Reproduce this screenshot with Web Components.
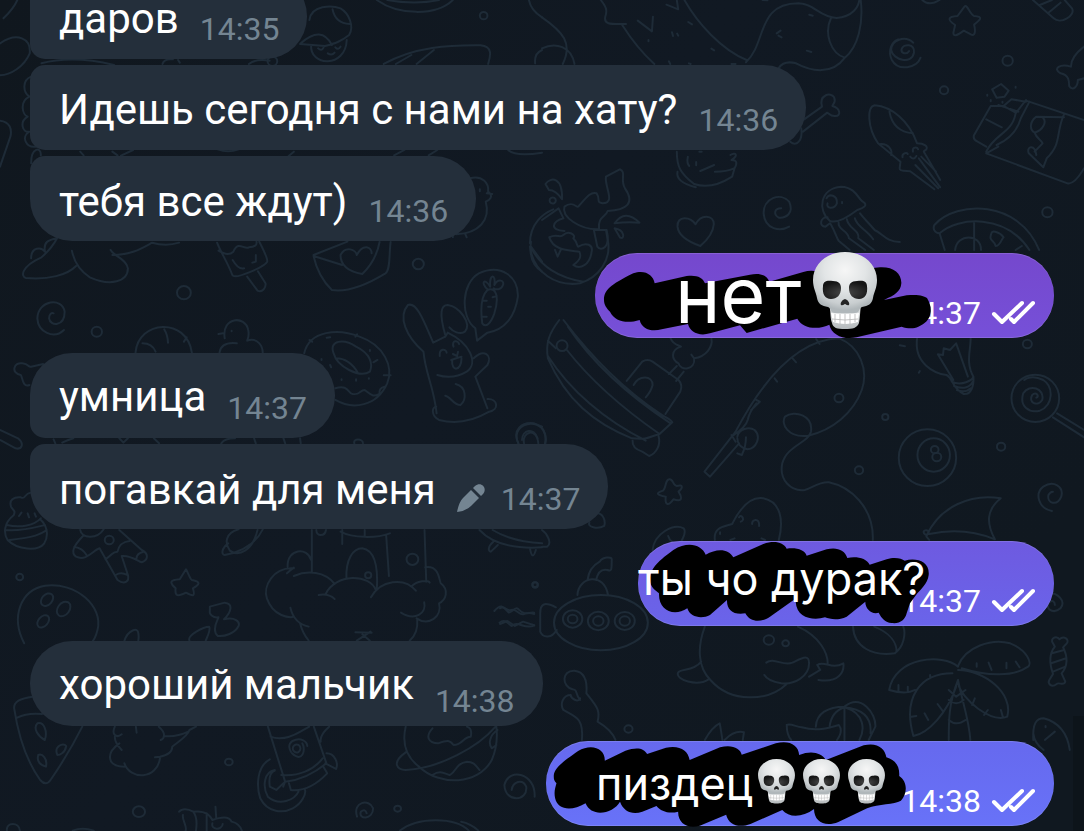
<!DOCTYPE html>
<html lang="ru">
<head>
<meta charset="utf-8">
<meta name="viewport" content="width=device-width, initial-scale=1">
<title>Чат</title>
<style>
  body { margin: 0; background: #111922; font-family: Roboto, "Noto Sans", sans-serif; }
</style>
</head>
<body>
<chat-thread>
  <message-group>
    <chat-message time="14:35" pos="mid">даров</chat-message>
    <chat-message time="14:36" pos="mid">Идешь сегодня с нами на хату?</chat-message>
    <chat-message time="14:36" pos="last">тебя все ждут)</chat-message>
  </message-group>
  <message-group out>
    <sent-message time="14:37" tone="violet"><big-caption>нет</big-caption><skull-emoji size="large"></skull-emoji></sent-message>
  </message-group>
  <message-group>
    <chat-message time="14:37" pos="first">умница</chat-message>
    <chat-message time="14:37" pos="last" edited>погавкай для меня</chat-message>
  </message-group>
  <message-group out>
    <sent-message time="14:37" tone="indigo">ты чо дурак?</sent-message>
  </message-group>
  <message-group>
    <chat-message time="14:38" pos="solo">хороший мальчик</chat-message>
  </message-group>
  <message-group>
    <sent-message time="14:38" tone="blue">пиздец<skull-emoji></skull-emoji><skull-emoji></skull-emoji><skull-emoji></skull-emoji></sent-message>
  </message-group>
</chat-thread>

<script>
const attach = (el, html) => {
  const t = document.createElement('template');
  t.innerHTML = html;
  el.attachShadow({ mode: 'open' }).append(t.content.cloneNode(true));
};

customElements.define('chat-wallpaper', class extends HTMLElement {
  constructor() {
    super();
    attach(this, `
<style>
  :host { display: block; position: absolute; inset: 0; overflow: hidden; }
  svg { width: 100%; height: 100%; display: block; }
  path, circle, ellipse { vector-effect: non-scaling-stroke; }
</style>
<svg viewBox="0 0 1084 831" preserveAspectRatio="xMidYMid slice" aria-hidden="true" fill="none" stroke="#1e2b37" stroke-width="2" stroke-linecap="round" stroke-linejoin="round">
 <defs><linearGradient id="g" x1="0" x2="1" y1="0" y2=".6"><stop offset="0" stop-color="#10171e"/><stop offset=".5" stop-color="#111923"/><stop offset="1" stop-color="#101820"/></linearGradient></defs>
 <path d="M0 0H1084V831H0Z" fill="url(#g)" stroke="none"/>
 <g transform="scale(.3457 .3333)">
  <path d="M10 55Q40 25 50 0M0 130C50 95 90 115 86 160C70 200 30 225 0 226M0 362C30 365 35 390 30 410L0 500M90 230C65 240 65 275 85 290C55 305 65 345 80 350C55 365 65 400 85 395C60 410 75 445 105 440M90 490C90 440 120 440 118 466M120 190Q210 165 330 195M470 192Q475 175 500 178M515 180L520 188M720 192Q740 175 780 182"/>
  <circle cx="788" cy="184" r="14"/><path d="M895 60C900 15 960 15 985 25C1010 40 1025 80 1010 105C985 125 970 130 940 138L868 132M962 28Q970 70 1012 72M870 130Q930 75 960 135M900 135C895 200 1000 205 1003 120M920 145Q930 155 936 143M970 142Q978 152 985 140M948 160Q960 168 968 158"/>
  <path d="M1090 0C1150 45 1260 50 1310 0M1120 0Q1200 15 1270 0"/><circle cx="1399" cy="47" r="11"/>
  <path d="M1110 192C1200 140 1300 135 1390 136C1425 140 1420 165 1412 192M1145 192L1190 165M1205 192L1255 150M1548 190Q1545 160 1568 150M1530 0Q1535 30 1568 52"/>
  <path d="M835 468L850 455M1140 466L1170 450M1240 466L1265 450M1470 450Q1490 470 1568 458M232 455L242 466M325 455L340 466M350 467L385 450M630 448Q660 460 690 448"/>
  <path d="M1360 535C1395 525 1415 550 1412 575C1430 590 1415 600 1405 605C1420 660 1385 700 1320 703M1388 568V574M1408 580L1424 582M1310 700V712M1345 700L1350 712"/>
 </g>
 <g transform="translate(542) scale(.3457 .3333)">
  <path d="M0 52C60 95 90 130 60 192M0 145C40 125 85 140 94 192M170 0C185 20 190 30 183 50C178 75 200 72 243 72M232 75Q275 145 325 192M360 14L394 28L390 0M277 62L318 94L321 50M412 0C450 70 520 150 592 180M423 66L434 73M376 97L379 108M391 101L394 107M308 120V124M490 146L498 151M367 184L371 192M425 190L430 192M548 192H560M590 187C650 130 620 10 742 10C790 12 800 50 852 54C900 50 915 20 918 0M836 54C815 100 835 160 876 173M922 0C930 70 915 140 876 173C840 225 780 215 735 190Q700 180 684 205M773 44L783 47M766 152L779 156M679 100L690 92M684 107L693 112M638 0L652 1"/>
  <path d="M1222 20C1230 10 1238 45 1250 48C1278 50 1268 60 1250 74C1256 100 1250 108 1242 104L1220 92C1200 108 1190 110 1190 98L1195 75C1170 58 1175 50 1202 48Z"/>
  <path d="M1062 153C1055 165 1038 160 1040 148C1045 130 1080 130 1076 158C1070 195 1015 180 1010 150C1010 120 1050 105 1074 128M1095 173C1085 205 1030 215 1012 180C1000 155 1010 125 1030 118"/>
  <circle cx="1347" cy="182" r="15"/><circle cx="1163" cy="271" r="12"/><circle cx="1462" cy="637" r="15"/>
  <path d="M1100 0Q1120 20 1150 0M1420 0L1480 55C1500 75 1545 45 1533 25L1512 0M1440 15L1475 0M1465 38L1500 8"/>
  <path d="M1568 140Q1530 170 1530 200C1500 190 1475 205 1500 220C1525 225 1525 245 1525 258C1535 275 1550 260 1550 240L1568 235"/>
  <path d="M745 368L810 320C800 285 835 275 845 292C852 308 840 312 840 318C865 325 865 350 848 348C835 350 830 340 825 338L755 395M750 385C755 425 735 440 718 425"/>
  <path d="M390 455C390 500 400 520 440 552Q490 570 550 530L557 505C565 490 565 480 548 480C570 465 560 455 545 465M392 515Q385 545 445 562M422 470Q418 490 426 498M446 486V496M458 513L498 495M500 515Q535 515 555 505M455 455H462"/>
  <path d="M963 316C940 320 940 380 972 430L1037 485C1035 505 1030 512 1045 512L1065 514L1135 568M963 316C1010 320 1060 360 1085 430C1105 430 1120 440 1110 450C1100 455 1105 455 1110 465L1152 540M1005 335Q1015 395 1073 400M980 432C1000 430 1015 450 1010 465M1080 495L1146 565M1090 475L1152 562M1097 470L1140 515M1043 472C1040 460 1055 455 1058 462M1073 455C1070 440 1085 440 1088 448M1065 470Q1075 482 1083 468"/>
  <path d="M1302 268L1328 252L1350 272L1338 290L1315 293ZM1358 298L1335 318H1298L1250 405Q1245 418 1260 425L1285 440M1335 318L1370 338M1285 358L1330 382M1320 315L1378 335M1285 455C1310 400 1360 400 1370 340L1400 300M1315 435Q1370 410 1385 355L1410 305M1285 460L1320 440M1358 298L1400 305M1400 302L1568 360M1285 460L1520 550Q1540 555 1568 505M1510 343C1485 400 1505 430 1460 475L1450 502L1408 460C1400 440 1425 430 1430 465M1510 352L1430 350C1410 365 1410 390 1425 398C1450 390 1460 365 1450 355M1425 398C1430 415 1445 420 1448 430L1425 455M1288 284V287M1298 300V304M1370 260V263M1332 305V308"/>
  <path d="M715 680C690 695 645 690 641 640C640 595 690 575 715 605C730 640 705 655 685 653C670 645 670 625 692 625"/>
  <path d="M458 738Q395 715 392 680C390 645 430 650 444 673C460 640 497 645 497 672Q495 705 458 738Z"/>
  <path d="M833 663C795 630 805 565 865 560C910 562 915 600 928 605C945 615 930 625 912 630C880 655 850 670 833 663M826 652C805 650 800 680 820 680L833 670M823 595C830 580 855 585 853 610C845 630 820 625 826 610M868 606V610M835 672C850 700 850 710 858 722L890 750M858 668C855 690 885 690 888 715L935 750M882 658C885 685 920 690 915 715L960 750M905 655C910 680 940 690 958 718M920 640C935 660 955 680 962 690C985 700 995 725 1035 726"/>
  <path d="M1150 700C1135 700 1130 685 1135 675C1200 600 1380 600 1438 750M1150 700C1205 650 1340 640 1410 750M1150 700L1165 750M1250 665V750M1195 750C1200 700 1270 700 1270 750M1300 700C1290 725 1310 720 1312 738C1325 740 1330 715 1335 712C1325 695 1300 690 1300 700M1370 750L1388 738"/>
  <path d="M0 660L48 625L62 655C30 665 20 690 65 693M22 602A9 9 0 1 0 22 601M10 552C25 530 60 530 58 598Q40 570 20 570ZM65 620C90 600 100 625 105 620C130 590 140 575 158 580C170 600 155 605 175 610C215 610 180 560 185 530L225 508C245 515 225 540 240 565C270 610 245 630 190 633C185 650 160 650 165 688C110 690 55 650 65 620M210 670Q240 625 282 668Q245 665 210 670M210 685C240 690 240 720 226 713ZM150 690H187C200 745 170 755 160 740Z"/>
 </g>
 <g transform="translate(0 230) scale(.3457 .3333)">
  <path d="M90 85C90 50 120 50 130 65C125 35 140 30 165 25Q150 55 120 82C60 110 60 140 75 144C140 150 195 135 220 108M208 62C215 100 235 125 260 142C320 170 370 155 370 115C365 85 330 80 320 60M325 75C380 75 410 55 440 38Q480 50 518 38M628 38C635 60 660 100 672 135C680 150 765 110 773 95Q775 85 750 35M632 62Q660 80 675 65C690 30 705 60 720 52Q745 50 742 35M673 90Q690 120 706 115M740 75V95L730 98M715 140L745 182C760 190 770 170 768 160L746 124"/>
  <path d="M907 78Q920 140 960 180Q1020 190 1115 130C1130 120 1125 70 1130 36M907 78L990 105M907 75L1005 35M1098 36C1090 80 1070 110 1048 132C1010 125 985 110 985 75C1000 45 1030 60 1032 75C1050 40 1075 50 1075 70"/>
  <circle cx="1210" cy="102" r="16"/><circle cx="532" cy="188" r="20"/><circle cx="280" cy="305" r="15"/>
  <path d="M185 300C155 330 110 305 108 265C110 210 180 200 187 245C187 290 145 290 142 265C142 250 150 248 155 250"/>
  <path d="M392 368C400 270 540 260 555 368M475 298Q485 315 486 338M532 335L540 322M412 340Q440 340 450 365M635 368Q640 335 685 340M650 325C640 260 710 255 718 300C722 320 715 330 715 332C745 320 760 350 760 368M632 312L645 310M670 302V304"/>
  <path d="M85 465C65 475 65 440 60 435C30 430 40 395 65 400C85 402 80 412 90 410L125 402M0 600L52 625C70 640 65 660 45 655L0 630"/>
  <path d="M880 370C895 300 980 295 1040 320C1110 345 1140 410 1120 460C1090 530 1020 540 970 510M965 370C950 330 995 325 1030 350C1070 370 1080 400 1070 425C1040 445 975 410 965 370M972 385Q1010 385 1035 428M970 475C1000 465 1005 480 1015 490C1040 500 1040 480 1055 480C1080 500 1080 500 1098 492Q1095 475 1112 470M895 330L903 335M945 323L955 322M1028 320L1033 313M1070 360V363M1080 397L1092 390M1110 436H1130M955 405L958 412M930 387V390M988 448V450M1030 448V452M1067 445V446"/>
  <path d="M1253 338C1225 270 1205 215 1180 225C1150 260 1175 320 1225 365C1230 430 1255 470 1263 550M1253 338L1288 320M1288 315C1270 250 1275 225 1295 225C1330 230 1365 280 1345 305C1330 315 1310 305 1300 292M1288 320L1295 308C1360 340 1385 400 1350 425Q1310 450 1265 435M1370 385C1400 355 1425 375 1410 405L1375 440L1410 535M1410 507C1440 505 1445 540 1415 545Q1340 590 1270 570C1245 555 1250 530 1262 530M1272 378C1270 355 1290 355 1292 368M1312 350C1305 330 1325 330 1328 342M1310 372L1322 378L1325 365M1305 390L1320 385L1335 380M1308 392C1305 425 1335 425 1335 385M1288 497C1305 500 1310 525 1332 525C1350 510 1350 470 1318 462"/>
  <path d="M1375 295C1330 260 1335 160 1385 130C1450 100 1500 140 1498 200C1490 260 1460 300 1410 308L1380 332ZM1410 180C1435 170 1445 200 1430 250C1420 280 1405 295 1395 280C1390 240 1390 200 1410 180M1410 178C1390 160 1400 140 1418 170C1415 130 1435 130 1430 165C1440 145 1460 150 1455 165C1450 180 1435 180 1428 175M1397 212H1408M1412 230H1420M1397 260H1408M1437 198L1425 202"/>
  <path d="M1536 35C1530 80 1545 110 1568 125M1536 50L1568 95M155 628L160 640M180 638Q195 630 212 625M345 625L357 638L370 625M445 625L460 640M640 640Q650 625 680 625M735 625L740 640M820 625L825 640M868 625L870 640"/>
  <path d="M1500 642C1480 600 1510 575 1545 580L1568 590M1510 630C1510 600 1545 590 1555 625"/>
 </g>
 <g transform="translate(542 320) scale(.3457 .3333)">
  <path d="M50 0C20 40 10 70 17 115C70 240 150 310 260 355C310 360 310 350 340 342L377 307C370 295 350 290 340 280C240 210 150 120 62 0M17 62L40 85M72 90C140 180 240 270 340 342M17 108C80 210 180 300 300 362M75 20C140 120 240 220 372 310M262 362Q260 385 290 395L310 408C330 400 345 375 337 348M245 183L290 125Q305 115 320 125L395 180Q408 195 400 215L357 282M265 195C280 165 320 165 320 195Q315 215 300 232M367 162L390 138M388 183L410 155M372 55C380 75 395 75 402 80C370 90 375 120 395 130C400 155 445 150 440 115L432 104M440 115C475 110 495 80 490 55"/>
  <circle cx="58" cy="77" r="16"/>
  <path d="M860 55C920 80 945 150 925 210C900 280 840 330 770 347C710 355 690 310 703 290C730 270 785 285 778 335C770 370 710 375 695 430C685 480 720 515 760 510C780 505 800 485 830 487C890 500 960 560 957 660M860 55Q700 60 560 335L470 455L486 470L570 370M793 57L803 72M725 115L735 127M673 175L680 185M620 240L630 245L605 270M620 250Q600 275 595 300Q590 320 555 345M548 345L560 365M565 350C570 325 600 320 615 330C635 350 620 385 595 388C575 385 565 370 565 355M590 352Q590 380 578 405L565 400"/>
  <circle cx="859" cy="234" r="13"/><circle cx="993" cy="291" r="9"/><circle cx="1328" cy="380" r="12"/><circle cx="917" cy="451" r="12"/><circle cx="1404" cy="72" r="13"/>
  <ellipse cx="1115" cy="413" rx="83" ry="85"/><ellipse cx="1133" cy="405" rx="47" ry="50"/><circle cx="1136" cy="389" r="11"/><circle cx="1142" cy="411" r="13"/>
  <path d="M1085 55C1075 130 1135 160 1170 165C1190 175 1185 205 1220 222C1240 225 1250 200 1248 170C1225 130 1240 90 1240 55M1190 180L1145 103L1160 105L1162 85L1180 90L1198 70L1232 170M1185 185C1215 200 1245 180 1248 170M1192 198C1220 210 1240 200 1246 185M1200 210Q1225 220 1240 205M1035 76L1050 79M1090 158L1093 153"/>
  <ellipse cx="1427" cy="235" rx="69" ry="71"/><path d="M1430 233C1440 230 1430 213 1418 225C1405 250 1435 260 1447 240C1455 205 1410 190 1392 220C1380 260 1410 280 1440 272C1480 255 1480 200 1450 180C1420 165 1400 175 1395 180M1490 280L1568 330M1478 292L1568 352"/>
  <path d="M368 478C380 475 378 498 390 498C410 492 407 505 395 515C410 540 400 545 380 538C365 560 355 555 358 530C335 525 325 520 350 512C360 505 355 480 368 478ZM500 660C495 620 530 620 550 612C580 550 610 530 640 535C690 545 700 600 685 660M570 592C575 580 590 600 575 605M608 612C605 600 630 590 628 618M515 637V642M545 660L557 655M635 655L645 660M320 690C325 640 380 610 410 625C420 640 405 655 402 668M365 648Q368 660 378 667"/>
  <path d="M1112 648C1150 560 1240 520 1327 535C1285 570 1285 610 1310 658M1120 642Q1220 620 1310 658M1105 640C1100 630 1115 628 1118 635C1120 645 1110 648 1105 640M1112 650L1120 660"/>
  <path d="M1475 573C1435 565 1425 520 1450 500C1480 480 1510 500 1502 530C1490 560 1460 550 1465 525C1470 515 1478 515 1478 515"/>
  <path d="M0 325Q15 345 10 370M160 580C175 580 185 600 180 618C160 630 130 620 137 608M0 630C15 640 30 670 15 680H0"/>
 </g>
 <g transform="translate(0 430) scale(.3457 .3333)">
  <path d="M88 188C70 190 75 210 60 202C40 200 25 210 32 230C40 245 45 240 40 255C10 280 10 310 22 330C50 360 110 365 128 340C145 310 130 280 118 270M20 285C60 295 100 285 118 265M15 300C60 305 110 290 130 285M28 330C70 325 110 320 135 300M55 258L62 248M80 250L84 262M100 250L104 260"/>
  <path d="M232 300C235 325 280 330 300 298M240 318C210 350 205 370 220 380C250 395 270 360 288 355L340 450C360 465 375 455 370 435L352 378C380 375 400 395 410 397C430 390 430 370 410 360L345 300M305 388C330 370 325 365 340 365C345 340 360 335 375 333M215 350Q240 355 250 375M335 435Q350 425 368 435M395 385Q395 370 415 365"/>
  <circle cx="316" cy="330" r="13"/><circle cx="57" cy="441" r="10"/>
  <path d="M690 298C650 310 650 340 665 362C690 380 730 365 745 300M660 340C640 355 640 375 650 375C700 365 740 340 760 298M538 418C545 430 550 448 555 450C585 455 575 465 558 475C565 500 560 500 538 488C515 500 505 500 508 475C490 458 490 450 520 448ZM607 530L650 518C675 520 670 545 648 568C680 560 695 575 690 588C680 610 650 620 630 618C610 600 630 570 632 562C615 565 605 550 607 545ZM548 632C540 615 590 590 605 590C610 600 600 620 595 632M360 632C370 600 400 590 400 610Q402 620 400 632"/>
  <path d="M70 640C30 560 60 480 130 467C220 455 300 530 282 600Q275 630 262 640"/><ellipse cx="136" cy="509" rx="15" ry="21" transform="rotate(40 136 509)"/><ellipse cx="184" cy="537" rx="17" ry="24" transform="rotate(35 184 537)"/><ellipse cx="125" cy="574" rx="14" ry="21" transform="rotate(40 125 574)"/>
  <path d="M902 300V425M1228 300L1233 455M985 305C1020 325 1090 325 1128 310M990 300V342M1117 315L1125 438M1002 445C1000 390 1020 355 1048 355C1080 360 1095 400 1090 480M1055 300V318M915 300C915 320 940 320 943 300M832 410C830 355 890 350 900 390M850 415C790 410 760 470 772 505C790 560 840 565 850 560M830 430Q840 420 850 413M850 438C890 420 940 425 968 462M922 495Q950 490 968 507M942 492C970 430 1070 430 1088 482M1073 502C1100 450 1170 440 1203 482M1190 470C1205 450 1240 450 1243 458M1230 412C1270 405 1270 450 1275 460C1300 480 1290 510 1270 520C1280 560 1240 590 1205 565M1160 548C1200 575 1235 550 1227 517M840 533Q850 580 893 590M868 580Q875 610 893 632M1207 568Q1210 610 1185 632M1028 607L1075 608M1072 605L1032 632M1048 613L1070 632"/>
  <circle cx="1193" cy="388" r="17"/><circle cx="1065" cy="436" r="9"/><circle cx="1548" cy="465" r="8"/>
  <path d="M1387 300Q1440 360 1568 352M1425 300Q1480 335 1568 340M1427 335C1410 350 1412 365 1420 365L1440 345M1533 355Q1540 395 1550 360M1430 543C1450 520 1455 530 1472 548C1490 540 1490 530 1500 538C1520 560 1530 545 1545 548M1445 578C1460 565 1470 580 1480 588C1500 570 1515 600 1545 587M1025 40C1020 25 1050 25 1050 40"/>
 </g>
 <g transform="translate(0 620) scale(.3827 .3333)">
  <path d="M85 230C50 235 35 245 37 265Q55 400 105 480Q120 500 132 480Q180 400 215 320M45 293Q70 278 110 282M98 310C85 325 100 350 117 360C125 335 115 305 98 310M150 405C140 380 165 365 173 378C170 400 155 405 150 405M100 405C95 425 105 435 120 440C125 415 110 400 100 405"/>
  <path d="M300 320C290 345 305 355 318 343M300 350C300 370 310 380 318 390M312 370C275 400 280 440 325 440M325 430C340 480 410 480 418 415M355 320L357 338M405 412L418 410C440 405 450 395 450 380C465 365 490 350 495 330L512 320M415 320C435 340 430 355 420 360M430 348Q460 352 492 335"/>
  <path d="M700 320L745 485Q800 480 853 430L820 320M707 350Q740 365 785 335L808 320M735 465C780 470 820 450 843 415M745 485L740 500M755 490L760 510C800 515 830 490 855 460L845 440M853 400C875 400 885 430 878 447L850 430M860 320Q835 345 838 365M760 395C740 355 800 345 803 378M763 400C790 430 800 390 790 370M785 385A10 12 0 1 0 785 386M705 418C670 440 670 500 680 535C700 580 740 580 765 565C790 550 800 520 797 510M718 450C690 455 685 500 700 530C730 560 770 540 780 515M705 500Q700 460 718 452M705 500L722 510L742 488"/>
  <path d="M1060 320C1050 370 1060 410 1095 440C1150 500 1250 495 1285 420C1300 380 1300 350 1297 320M1060 397C1020 430 1040 450 1060 450C1150 445 1250 380 1295 320M1130 325C1110 350 1120 370 1145 370C1170 360 1175 360 1185 375C1210 375 1210 350 1230 350Q1235 325 1220 320M1130 465C1150 450 1160 460 1175 465C1190 460 1190 430 1220 425C1240 425 1245 440 1253 450M1300 330C1280 345 1275 370 1285 385L1297 375"/>
  <circle cx="598" cy="426" r="10"/><circle cx="363" cy="575" r="16"/><circle cx="1039" cy="566" r="9"/>
  <path d="M1397 530C1400 460 1330 440 1318 495C1320 550 1380 545 1375 500C1365 475 1340 485 1337 510M933 590C920 545 965 535 975 565C975 600 935 600 943 575Q955 565 958 580M468 575C475 565 490 565 505 575C540 570 550 590 555 600C580 590 600 590 605 605C625 610 630 625 632 632M478 585C475 600 490 620 485 632M505 575C515 590 515 610 512 632M540 580V632M563 560L565 595M555 610C550 630 580 632 582 612M1045 632C1090 590 1190 590 1225 632M1205 605Q1230 610 1250 632M190 632Q215 620 245 632M18 632C15 605 50 605 52 632"/>
 </g>
 <g transform="translate(500 480) scale(.3724 .3333)">
  <ellipse cx="271" cy="428" rx="126" ry="83"/><circle cx="195" cy="417" r="26"/><circle cx="195" cy="417" r="13"/><circle cx="264" cy="423" r="28"/><circle cx="264" cy="423" r="14"/><circle cx="335" cy="423" r="27"/><circle cx="335" cy="423" r="14"/><circle cx="94" cy="314" r="7"/><circle cx="345" cy="747" r="11"/>
  <path d="M208 345C210 290 280 275 290 345M235 300C240 260 260 250 268 245C275 230 300 230 300 237C300 270 300 275 288 270Q265 265 258 300M150 382C120 365 108 370 108 400V455C115 475 140 475 152 450M0 385C10 375 20 395 30 390C45 385 50 405 62 403Q75 395 92 402M0 432L20 423L40 438L62 425L92 436"/>
  <path d="M550 440C530 500 530 560 565 600C620 670 720 665 770 612M540 545C520 575 485 565 478 578C470 600 530 620 560 598M800 440C860 470 880 520 880 550M715 548C735 530 760 560 785 548C810 535 830 520 830 550C830 590 790 615 755 610C730 605 715 595 710 585M852 555C870 540 890 570 922 550C925 575 910 610 855 600M852 555L860 570L830 590"/><circle cx="722" cy="480" r="14"/><circle cx="767" cy="490" r="9"/>
  <path d="M948 440C950 500 1000 530 1060 520C1085 500 1090 460 1083 440M1005 440C1050 460 1065 490 1065 515M1465 340C1500 335 1520 365 1505 385Q1490 400 1475 388C1460 370 1490 350 1490 375"/>
  <path d="M1230 558C1250 500 1320 475 1370 490C1415 510 1430 550 1418 560C1380 590 1310 590 1240 565M1230 560C1190 520 1060 530 1045 630Q1090 645 1115 630M1215 580C1130 580 1080 650 1110 768C1150 760 1200 700 1225 620M1230 570C1300 570 1380 640 1362 710C1320 730 1240 660 1230 610M1230 600C1205 670 1205 720 1205 780M1230 600C1240 660 1260 720 1263 780M1205 630L1225 650L1250 630M1205 660Q1225 680 1245 660M1205 720Q1225 740 1250 720M1280 560V550M1320 570L1312 548M1360 565V548M1395 562L1385 545M1070 632V615M1095 635V620M1155 595V585M1175 672L1190 695M1140 700L1150 720M1105 710L1118 708M1275 655L1268 675M1310 690L1300 705M1350 710L1345 690"/>
  <path d="M1485 490C1475 475 1495 465 1502 478C1515 465 1530 480 1522 490L1512 502C1525 530 1525 560 1508 580L1518 605C1515 620 1500 605 1495 612C1480 625 1470 610 1475 600L1485 582C1475 550 1475 520 1490 500ZM1482 520L1515 510M1480 550L1520 535M1485 575L1518 560M1432 780C1430 730 1440 715 1460 715C1510 730 1525 770 1530 810M1432 760Q1435 790 1460 810M1463 780L1490 755M1465 738V742"/>
  <path d="M215 660C200 640 210 630 195 628C165 620 165 570 200 572C225 575 235 600 232 640C260 680 270 690 262 725Q300 750 310 780M215 655C210 670 190 655 190 645C170 645 160 670 170 690C200 710 225 710 220 780"/>
  <path d="M550 780Q570 740 590 730Q595 760 597 780M603 780Q630 750 655 757L652 780M770 735C780 730 795 740 810 742C850 755 880 745 910 735C920 750 915 765 905 780M770 735Q770 765 782 780M848 740C850 700 880 680 925 680C970 640 1010 700 1008 740L990 780M885 740Q890 695 925 682M925 682V780M925 682C980 700 980 750 965 780M925 682Q1000 690 995 760"/>
 </g>
 <path d="M1073 716H1084V831H1073Z" fill="#0d141a" stroke="none"/>
 <g transform="translate(390 150) scale(.3333)"><path d="M420 280C420 220 460 190 490 178M420 290C430 370 500 410 570 400C630 380 660 330 655 280L648 240M422 290C450 350 510 385 580 395M478 262C500 250 510 265 520 255C535 240 560 255 550 265C565 280 560 290 565 290C590 275 610 285 605 305C600 345 570 360 550 345C570 330 575 320 568 305C530 300 490 300 478 262M495 300L503 320L512 300M385 880C360 830 430 800 460 840Q470 860 465 880M402 880C395 845 440 830 445 880"/></g>
</svg>`);
  }
});

customElements.define('chat-thread', class extends HTMLElement {
  constructor() {
    super();
    attach(this, `
<style>
  :host { display: block; position: relative; height: 100vh; overflow: hidden; }
  main { position: relative; box-sizing: border-box; height: 100%; padding: 0 30px 5px;
         display: flex; flex-direction: column; justify-content: flex-end; }
  ::slotted(*) { margin-top: 15px; flex: none; }
  ::slotted([out]) { margin-top: 12px; }
</style>
<chat-wallpaper></chat-wallpaper>
<main><slot></slot></main>`);
  }
});

customElements.define('message-group', class extends HTMLElement {
  constructor() {
    super();
    attach(this, `<style>:host { display: flex; flex-direction: column; gap: 6px; }</style><slot></slot>`);
  }
});

customElements.define('chat-message', class extends HTMLElement {
  constructor() {
    super();
    const pencil = this.hasAttribute('edited')
      ? `<svg role="img" aria-label="изменено" viewBox="0 0 28 28"><path d="M0 28Q2 18 6 14L14 6L22 14L14 22Q9 27 0 28ZM16 4L18 2C24-3 31 4 26 10L24 12Z"/></svg>` : '';
    attach(this, `
<style>
  :host { display: flex; align-items: flex-end; align-self: flex-start; box-sizing: border-box; height: 85px;
          padding: 0 28px 0 29px; background: #242f3b; border-radius: 42px; color: #fff; white-space: nowrap; }
  :host([pos="mid"]) { border-radius: 15px 42px 42px 15px; }
  :host([pos="first"]) { border-radius: 42px 42px 42px 15px; }
  :host([pos="last"]) { border-radius: 15px 42px 42px 42px; }
  p { margin: 0 21px 16px 0; font-size: 42px; line-height: 50px; }
  :host([pos="mid"]) p { margin-bottom: 15px; }
  :host([pos="last"]) p { margin-bottom: 14px; }
  time { margin-bottom: 11px; font-size: 32px; line-height: 38px; color: #748592; }
  :host([pos="solo"]) time { margin-bottom: 6px; }
  svg { width: 28px; height: 28px; margin: 0 16px 17px 0; fill: #748592; }
</style>
<p><slot></slot></p>${pencil}<time>${this.getAttribute('time')}</time>`);
  }
});

const SCRIBBLES = {
  violet: ['15 39 1377 255', 'M42 180C42 150 60 135 130 100C165 88 190 105 194 130L290 108C320 104 338 112 345 130L480 104C510 98 530 105 538 125L640 96C660 90 680 92 700 100L870 82C910 80 935 100 934 130C932 155 915 165 882 180L950 166C985 162 1003 168 1011 174C1020 190 1023 200 1022 215C1019 240 1005 250 985 260C970 268 950 265 935 260L800 292C760 300 725 285 718 254C690 268 640 270 622 236L470 279L450 256L360 280C325 290 300 275 294 252L215 268C185 276 155 268 149 240C110 252 75 245 60 215C50 205 42 195 42 180Z'],
  indigo: ['24 33 1248 255', 'M60 150C60 120 75 100 130 60C175 32 215 45 227 74C260 55 295 55 310 82L400 42C435 30 460 38 470 56C500 52 525 60 530 77L590 58C620 50 645 60 652 84C680 78 710 85 719 104L770 88C795 80 815 86 824 92C860 82 900 95 896 135C894 160 870 180 858 195L840 220L830 250C825 270 810 282 785 279C765 277 755 265 746 248C725 255 705 235 706 215L650 260C625 272 600 268 585 262C550 272 500 265 497 215L495 207L420 260C395 278 360 278 346 250C310 256 290 240 291 210L240 255C215 268 180 262 172 235C130 262 85 240 87 190C75 180 60 170 60 150Z'],
  blue: ['15 33 1503 255', 'M38 140C38 120 50 105 110 63C150 40 190 55 189 92L250 62C285 50 305 55 314 72L370 53C410 45 435 60 440 90L530 52C565 42 590 55 594 74L695 40C735 30 762 45 764 75C800 60 830 68 843 90L955 46C995 36 1018 55 1022 82C1050 90 1062 110 1060 138C1085 155 1085 190 1065 212C1045 225 1000 220 965 235L880 276C840 292 808 275 808 237C775 262 735 265 714 240L620 282C585 295 555 285 548 254L470 287C435 298 405 280 406 245C380 252 355 245 342 228L300 245C270 255 245 245 234 215C215 250 150 265 132 220C90 245 50 240 42 205C38 185 42 175 46 160C40 152 38 150 38 140Z']
};

customElements.define('sent-message', class extends HTMLElement {
  constructor() {
    super();
    const [box, d] = SCRIBBLES[this.getAttribute('tone')];
    attach(this, `
<style>
  :host { display: flex; position: relative; align-self: flex-end; align-items: flex-end; justify-content: flex-end;
          box-sizing: border-box; height: 85px; padding: 0 18px 0 0; border-radius: 42px; color: #fff; white-space: nowrap;
          box-shadow: inset 0 1px #ffffff22, inset 0 -1px #ffffff22; }
  :host([tone="violet"]) { width: 459px; background: linear-gradient(#7548cd, #7650d8); --start: 80px; --size: 77px; }
  :host([tone="indigo"]) { width: 416px; background: linear-gradient(#6e5ae0, #6a64ea); --start: 0; --size: 45px; --lift: 10px; }
  :host([tone="blue"]) { width: 508px; background: linear-gradient(#6669ee, #6872f8); --start: 50px; --size: 45px; }
  time { margin: 0 10px 6px 0; font-size: 32px; line-height: 38px; }
  .ticks { width: 45px; height: 25px; margin-bottom: 13px; fill: none; stroke: #fff; stroke-width: 4; stroke-linecap: round; stroke-linejoin: round; }
  .ink { position: absolute; inset: 0; width: 100%; height: 100%; overflow: visible; fill: #000; }
  .caption { position: absolute; inset: 0; display: flex; align-items: center; padding: 0 0 var(--lift, 0) var(--start);
             font: 400 var(--size)/1 Inter, sans-serif; }
</style>
<time>${this.getAttribute('time')}</time>
<svg class="ticks" role="img" aria-label="прочитано" viewBox="0 0 45 25"><path d="M3 14L11 22L31 3M20 19L23 22L42 3"/></svg>
<svg class="ink" viewBox="${box}" preserveAspectRatio="none" aria-hidden="true"><path d="${d}"/></svg>
<div class="caption"><slot></slot></div>`);
  }
});

customElements.define('big-caption', class extends HTMLElement {
  constructor() { super(); attach(this, `<style>:host { display: block; margin-right: 12px; }</style><slot></slot>`); }
});

customElements.define('skull-emoji', class extends HTMLElement {
  constructor() {
    super();
    attach(this, `
<style>
  :host { display: block; flex: none; width: 37px; height: 45px; margin: 0 3px 4px 5px; }
  :host([size="large"]) { width: 64px; height: 78px; margin: 0 0 9px; }
  svg { display: block; width: 100%; height: 100%; overflow: visible; }
</style>
<svg viewBox="0 0 64 78" role="img" aria-label="череп">
 <defs>
  <radialGradient id="h" cx=".5" cy=".3" r=".65"><stop offset="0" stop-color="#f6f6f6"/><stop offset=".5" stop-color="#e2e5e6"/><stop offset=".85" stop-color="#c9ced0"/><stop offset="1" stop-color="#b0b7ba"/></radialGradient>
  <radialGradient id="e" cx=".5" cy=".65" r=".6"><stop offset="0" stop-color="#4a4a4a"/><stop offset="1" stop-color="#151515"/></radialGradient>
  <linearGradient id="j" x1="0" x2="0" y1="0" y2="1"><stop offset="0" stop-color="#e8eaeb"/><stop offset="1" stop-color="#b5babc"/></linearGradient>
 </defs>
 <path d="M16 52H48C47 60 47 66 46 71C44 76 40 77 32 77S20 76 19 71C17 66 18 59 16 52Z" fill="url(#j)"/>
 <path d="M32 0C14 0 0 12 0 28C0 36 3 40 4 46C5 52 9 54 15 55C19 57 17 61 22 61H42C47 61 45 57 49 55C55 54 59 52 60 46C61 40 64 36 64 28C64 12 50 0 32 0Z" fill="url(#h)"/>
 <path d="M10 34C10 29 14 28 20 29C26 29 28 32 28 36C28 43 24 47 18 47C12 47 9 42 10 34ZM54 34C54 29 50 28 44 29C38 29 36 32 36 36C36 43 40 47 46 47C52 47 55 42 54 34Z" fill="url(#e)"/>
 <path d="M32 47C35 48 37 51 36 53C34 54 33 52 32 52C31 52 30 54 28 53C27 51 29 48 32 47Z" fill="#242424"/>
 <path d="M18 61Q32 63 46 61L45 70Q32 74 20 70Z" fill="#fff"/>
 <path d="M22 62V70M27 62V72M32 62V72M37 62V72M42 62V70M19 67Q32 69 45 67" fill="none" stroke="#b4b4b4" stroke-width=".8"/>
</svg>`);
  }
});
</script>
</body>
</html>
